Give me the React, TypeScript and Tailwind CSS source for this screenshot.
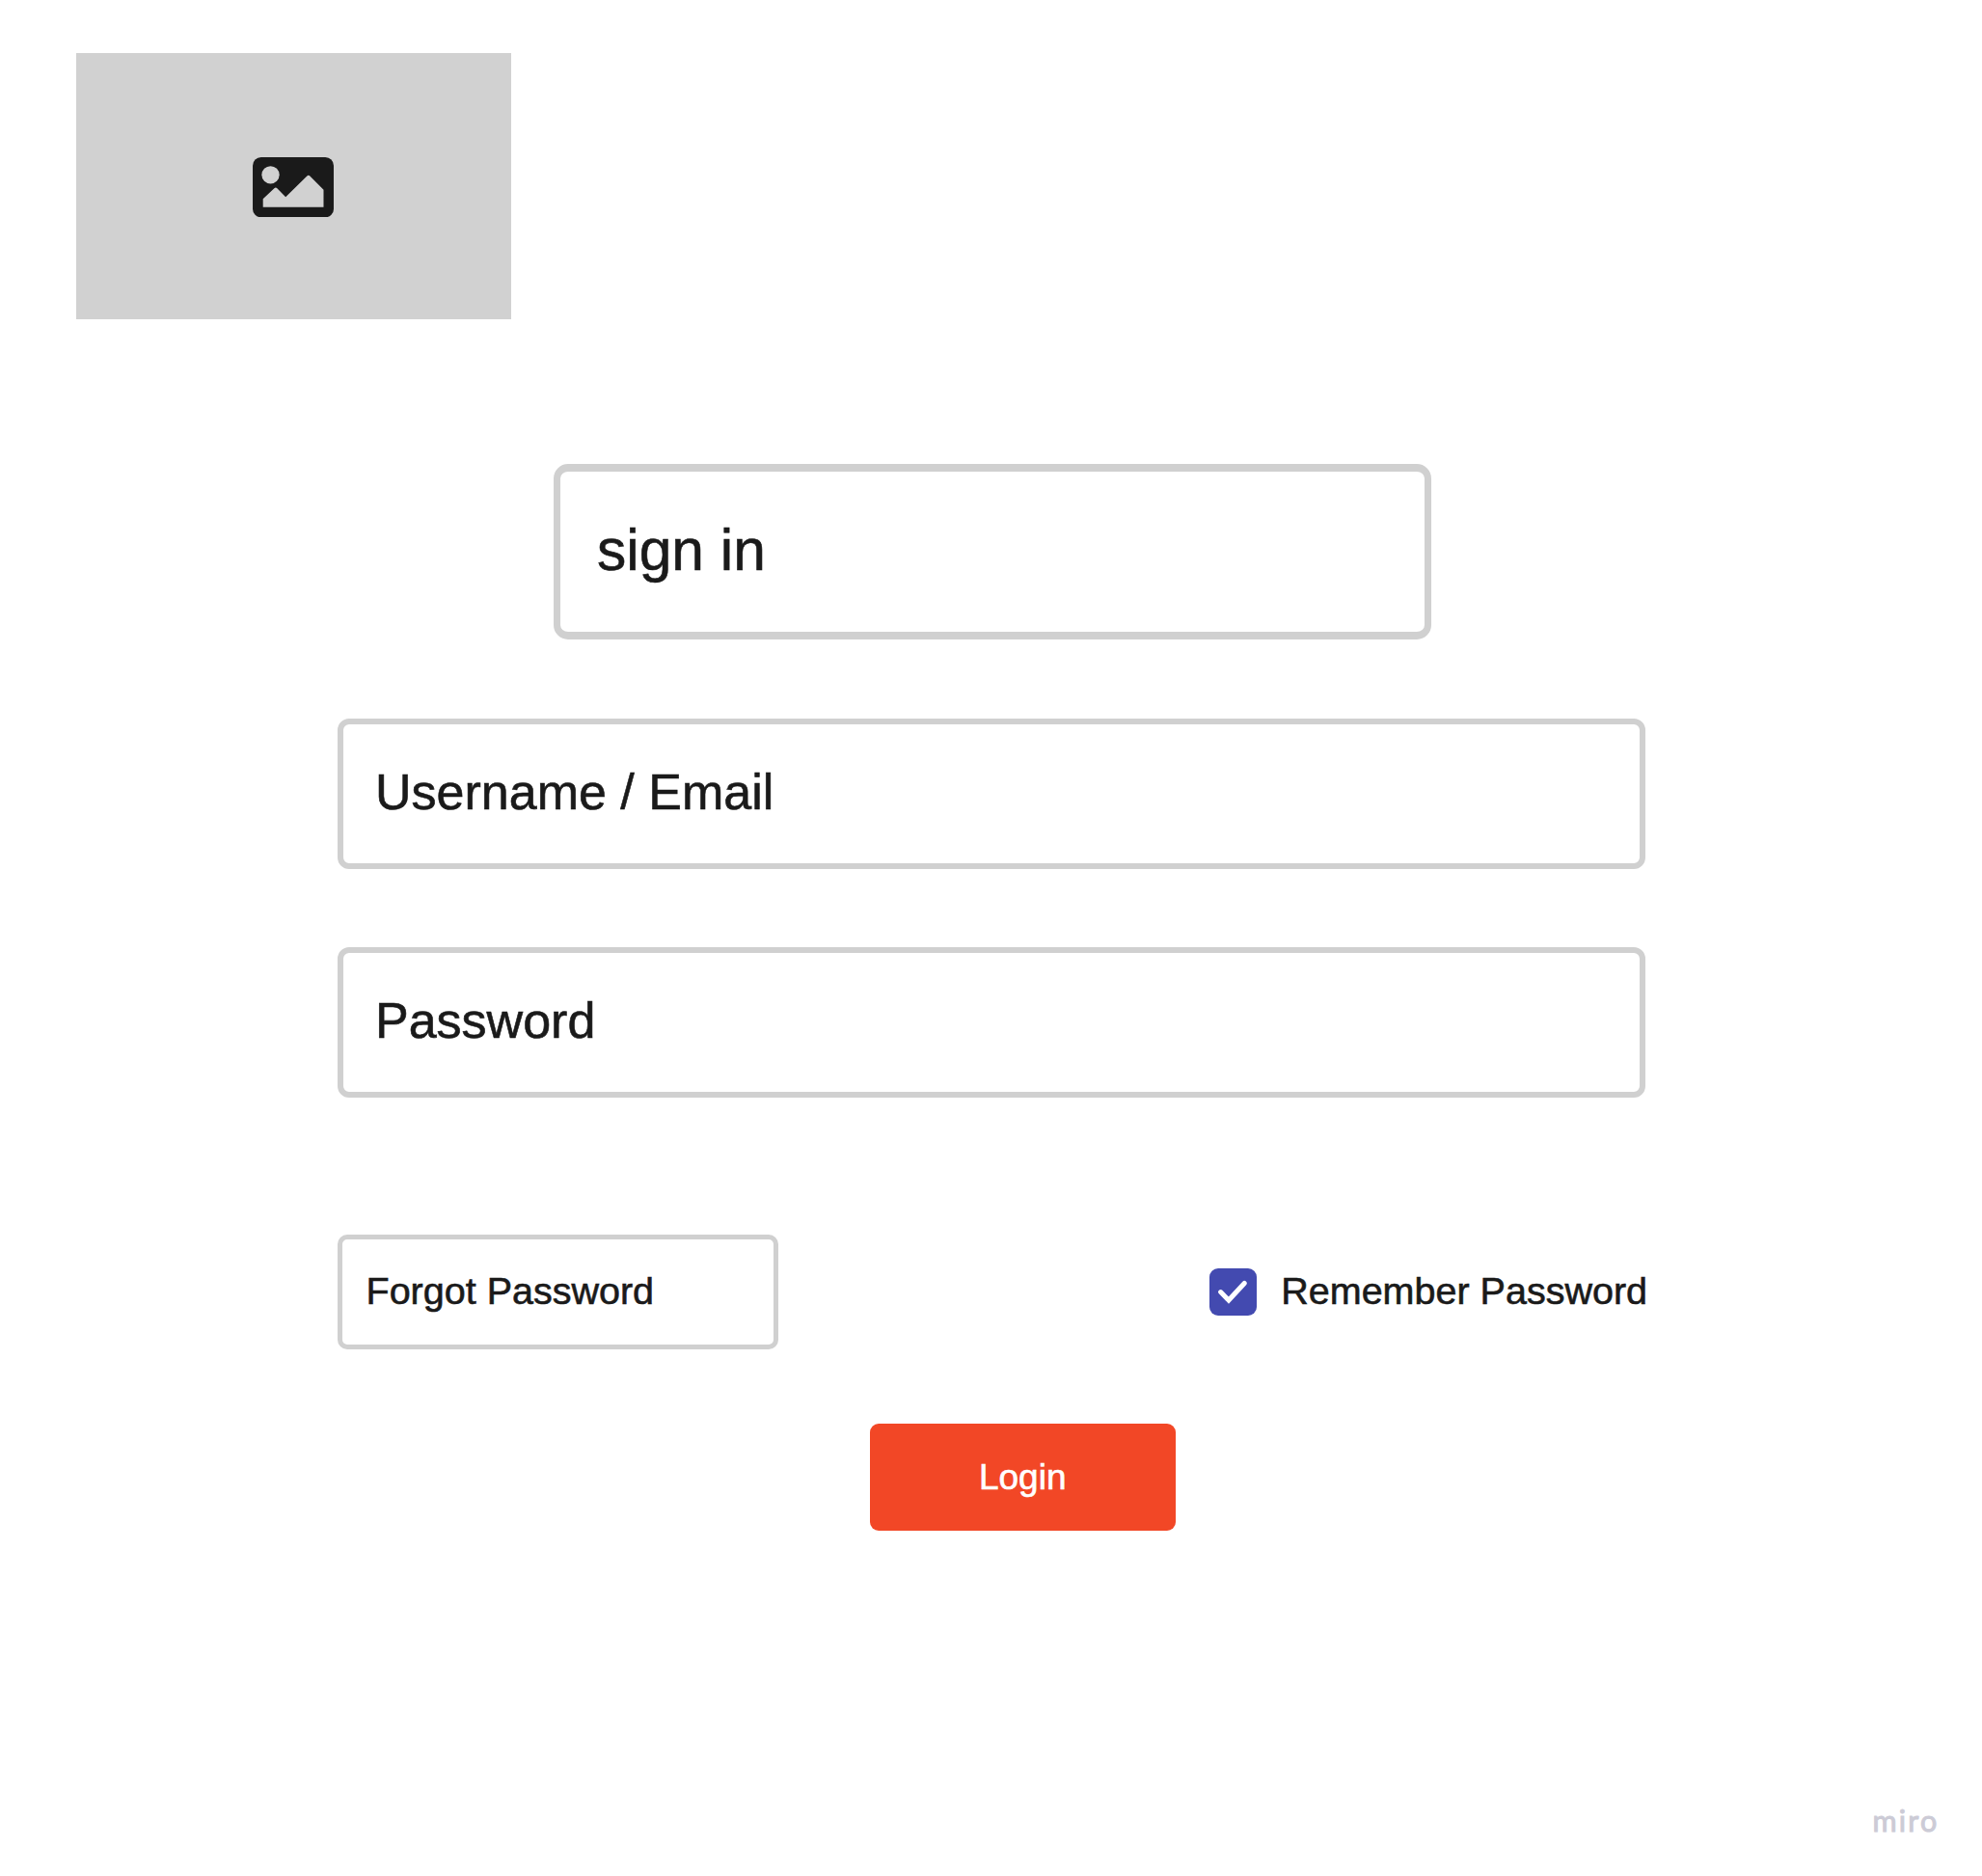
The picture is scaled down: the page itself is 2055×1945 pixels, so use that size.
import React from "react";

function ImageIcon() {
  return (
    <svg viewBox="0 0 252 187" className="mt-[1px] mr-[0.4px] h-[62.3px] w-[84px]" aria-hidden="true">
      <rect width="252" height="187" rx="26" fill="#1a1a1a" />
      <circle cx="55.500" cy="55" r="27.500" fill="#d1d1d1" />
      <path
        d="M32 155.500V130L67 96.500Q71.500 92 76 96.500L102.500 123.500L169 58.500Q173.500 54.500 178 58.500L220.500 101V155.500Z"
        fill="#d1d1d1"
      />
    </svg>
  );
}

function CheckIcon() {
  return (
    <svg viewBox="0 0 149 149" className="size-full" aria-hidden="true">
      <path
        d="M35 74L60 99.500L109 46.500"
        fill="none"
        stroke="#fff"
        strokeWidth="15"
        strokeLinecap="round"
      />
    </svg>
  );
}

function Field({ label }: { label: string }) {
  return (
    <div className="flex h-[156px] w-full items-center rounded-[12px] border-[6px] border-[#d0d0d0] pb-[3px] pl-[33px] text-[52px] leading-none">
      {label}
    </div>
  );
}

export default function App() {
  return (
    <main className="flex h-[1945px] w-[2055px] flex-col overflow-hidden bg-white font-['Liberation_Sans',Arial,sans-serif] text-[#1a1a1a] [-webkit-text-stroke:0.6px_currentColor]">
      <div className="mt-[55.300px] ml-[79px] flex h-[276px] w-[451px] shrink-0 items-center justify-center bg-[#d1d1d1]">
        <ImageIcon />
      </div>

      <form className="mt-[149.700px] ml-[350px] flex w-[1356px] flex-col">
        <h1 className="ml-[224px] flex h-[182.500px] w-[910px] items-center rounded-[15px] border-x-[7px] border-y-[8px] border-[#d0d0d0] pb-[3px] pl-[38px] text-[60.5px] leading-none">
          sign in
        </h1>
        <div className="mt-[81.500px] flex flex-col gap-[81px]">
          <Field label="Username / Email" />
          <Field label="Password" />
        </div>

        <div className="mt-[142px] flex h-[119px] items-center justify-between">
          <div className="flex h-full w-[457px] items-center rounded-[10px] border-[5px] border-[#d0d0d0] pb-[1px] pl-[24.5px] text-[39.5px] leading-none">
            Forgot Password
          </div>
          <label className="flex items-center">
            <span className="flex size-[49.500px] rounded-[9px] bg-[#434ab0]">
              <CheckIcon />
            </span>
            <span className="-mr-[2px] ml-[25px] pb-[1px] text-[39.5px] leading-none whitespace-nowrap">
              Remember Password
            </span>
          </label>
        </div>

        <button
          type="button"
          className="mt-[77.3px] ml-[551.600px] flex h-[110.500px] w-[317.200px] items-center justify-center rounded-[9px] bg-[#f24726] pb-[1px] text-[37px] leading-none text-white"
        >
          Login
        </button>
      </form>

      <div className="mt-auto mr-[44.5px] mb-[43px] self-end font-[Lato,sans-serif] text-[30.5px] leading-none font-normal tracking-[2.2px] text-[#cccbd6] [-webkit-text-stroke:1px_currentColor]">
        miro
      </div>
    </main>
  );
}
